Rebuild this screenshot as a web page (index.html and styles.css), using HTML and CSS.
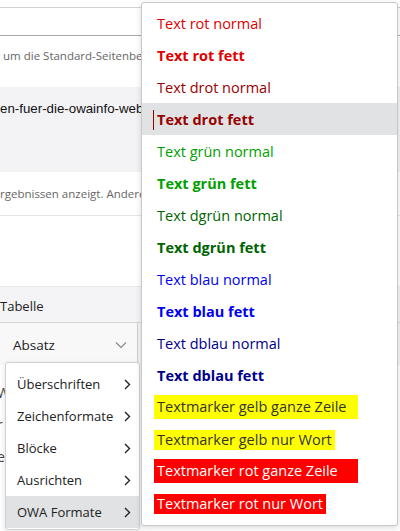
FILE: index.html
```html
<!DOCTYPE html>
<html lang="de">
<head>
<meta charset="utf-8">
<title>OWA Formate</title>
<link rel="stylesheet" href="styles.css">
</head>
<body>
<div class="page">
  <div class="top-gap"></div>
  <div class="field"></div>
  <div class="hint"><div class="clip"><span class="muted">um die Standard-Seitenbeschreibung zu ersetzen</span></div></div>
  <div class="band"><div class="clip"><span class="url">en-fuer-die-owainfo-webseite</span></div></div>
  <div class="hint2"><div class="clip"><span class="muted">rgebnissen anzeigt. Andere Suchmaschinen</span></div></div>
  <div class="spacer"></div>
  <div class="toolbar">
    <div class="tab-row">Tabelle</div>
    <div class="absatz-row">
      <span>Absatz</span>
      <svg class="chev-down" width="12" height="8" viewBox="0 0 12 8"><path d="M1 1.5 L6 6.5 L11 1.5" fill="none" stroke="#8a8a8a" stroke-width="1.2"/></svg>
    </div>
  </div>
  <div class="below">
    <div class="below-line">W</div>
    <div class="below-line">r</div>
    <div class="below-line">e</div>
  </div>
</div>

<div class="submenu">
  <div class="sub-item"><span>Überschriften</span><svg class="chev" width="7" height="11" viewBox="0 0 7 11"><path d="M1 1 L5.5 5.5 L1 10" fill="none" stroke="#222" stroke-width="1.4"/></svg></div>
  <div class="sub-item"><span>Zeichenformate</span><svg class="chev" width="7" height="11" viewBox="0 0 7 11"><path d="M1 1 L5.5 5.5 L1 10" fill="none" stroke="#222" stroke-width="1.4"/></svg></div>
  <div class="sub-item"><span>Blöcke</span><svg class="chev" width="7" height="11" viewBox="0 0 7 11"><path d="M1 1 L5.5 5.5 L1 10" fill="none" stroke="#222" stroke-width="1.4"/></svg></div>
  <div class="sub-item"><span>Ausrichten</span><svg class="chev" width="7" height="11" viewBox="0 0 7 11"><path d="M1 1 L5.5 5.5 L1 10" fill="none" stroke="#222" stroke-width="1.4"/></svg></div>
  <div class="sub-item active"><span>OWA Formate</span><svg class="chev" width="7" height="11" viewBox="0 0 7 11"><path d="M1 1 L5.5 5.5 L1 10" fill="none" stroke="#222" stroke-width="1.4"/></svg></div>
</div>

<div class="menu">
  <div class="item"><span class="rot">Text rot normal</span></div>
  <div class="item"><span class="rot bold">Text rot fett</span></div>
  <div class="item"><span class="drot">Text drot normal</span></div>
  <div class="item active"><span class="drot bold caret">Text drot fett</span></div>
  <div class="item"><span class="gruen">Text grün normal</span></div>
  <div class="item"><span class="gruen bold">Text grün fett</span></div>
  <div class="item"><span class="dgruen">Text dgrün normal</span></div>
  <div class="item"><span class="dgruen bold">Text dgrün fett</span></div>
  <div class="item"><span class="blau">Text blau normal</span></div>
  <div class="item"><span class="blau bold">Text blau fett</span></div>
  <div class="item"><span class="dblau">Text dblau normal</span></div>
  <div class="item"><span class="dblau bold">Text dblau fett</span></div>
  <div class="item"><span class="mark-yellow line">Textmarker gelb ganze Zeile</span></div>
  <div class="item"><span class="mark-yellow word">Textmarker gelb nur Wort</span></div>
  <div class="item"><span class="mark-red line">Textmarker rot ganze Zeile</span></div>
  <div class="item"><span class="mark-red word">Textmarker rot nur Wort</span></div>
</div>
</body>
</html>
```

FILE: styles.css
```css
html, body {
  margin: 0;
  padding: 0;
}
body {
  width: 400px;
  height: 531px;
  overflow: hidden;
  position: relative;
  background: #fff;
  font-family: "Open Sans", "Noto Sans", sans-serif;
  color: #222;
}
.page {
  width: 400px;
}
.top-gap {
  height: 7px;
}
.field {
  height: 27px;
  border-top: 1px solid #d2d2d2;
  border-bottom: 1px solid #a8a8a8;
}
.clip {
  width: 141px;
  overflow: hidden;
  white-space: nowrap;
}
.hint {
  height: 51px;
  box-sizing: border-box;
  padding: 7px 0 0 3px;
}
.hint .clip {
  width: 138px;
}
.muted {
  font-size: 11.5px;
  line-height: 16px;
  color: #666;
}
.band {
  height: 85px;
  box-sizing: border-box;
  background: #f3f3f5;
  padding-top: 9px;
}
.url {
  font-family: "Liberation Sans", Arial, sans-serif;
  font-size: 13.3px;
  line-height: 16px;
  color: #111;
}
.hint2 {
  height: 44px;
  box-sizing: border-box;
  padding-top: 9px;
  border-bottom: 1px solid #e6e6e6;
}
.spacer {
  height: 70px;
}
.toolbar {
  background: #f4f4f6;
  border-top: 1px solid #e8e8ea;
}
.tab-row {
  height: 36px;
  box-sizing: border-box;
  padding-top: 9px;
  font-size: 13px;
  line-height: 20px;
  border-bottom: 1px solid #d6d6d8;
}
.absatz-row {
  width: 138px;
  height: 42px;
  box-sizing: border-box;
  border-right: 1px solid #d2d2d2;
  background: #f8f8f9;
  display: flex;
  align-items: center;
  justify-content: space-between;
  padding: 2px 10px 0 13px;
  font-size: 13.5px;
}
.chev-down {
  display: block;
}
.below {
  padding-top: 18px;
  width: 5px;
  overflow: hidden;
}
.below-line {
  height: 32px;
  font-size: 14px;
  color: #444;
  margin-left: -3px;
}

/* left submenu */
.submenu {
  position: absolute;
  left: 5px;
  top: 362px;
  width: 135px;
  box-sizing: border-box;
  height: 168px;
  background: #fff;
  border: 1px solid #d0d0d0;
  border-radius: 3px;
  box-shadow: 0 2px 6px rgba(0, 0, 0, 0.12);
  padding-top: 5px;
}
.sub-item {
  height: 32px;
  box-sizing: border-box;
  display: flex;
  align-items: center;
  justify-content: space-between;
  padding: 0 8px 0 11px;
  font-size: 13px;
  color: #222;
  white-space: nowrap;
}
.sub-item.active {
  background: #e1e2e4;
}
.chev {
  display: block;
  flex: none;
}

/* right menu */
.menu {
  position: absolute;
  left: 141px;
  top: 2px;
  width: 257px;
  box-sizing: border-box;
  background: #fff;
  border: 1px solid #c8c8c8;
  border-radius: 3px;
  box-shadow: 0 2px 6px rgba(0, 0, 0, 0.14);
  padding: 4px 0 6px;
}
.item {
  height: 32px;
  box-sizing: border-box;
  display: flex;
  align-items: center;
  padding: 2px 0 0 12px;
  font-size: 14.5px;
  white-space: nowrap;
}
.item.active {
  background: #e1e2e4;
}
.item span {
  padding: 0 3px;
  line-height: 20px;
}
.bold {
  font-weight: 700;
}
.rot { color: #e00000; }
.drot { color: #990000; }
.gruen { color: #00a000; }
.dgruen { color: #006400; }
.blau { color: #0000f0; }
.dblau { color: #00008b; }
.caret {
  border-left: 1px solid #990000;
  margin-left: -1px;
}
.mark-yellow {
  background: #ffff00;
  color: #333;
}
.mark-red {
  background: #ff0000;
  color: #fff;
}
.item .line {
  display: block;
  width: 204px;
  box-sizing: border-box;
  line-height: 24px;
  margin-top: -2px;
}
.word {
  line-height: 20px;
}
```
